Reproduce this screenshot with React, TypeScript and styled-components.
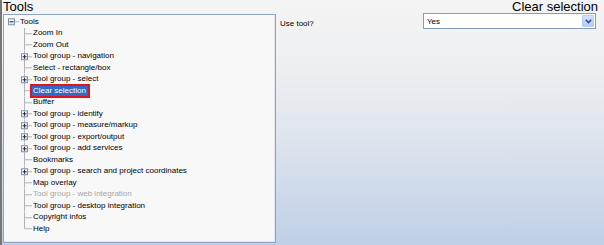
import styled, { createGlobalStyle } from 'styled-components';

type NodeKind = 'root' | 'leaf' | 'group';

interface TreeNode {
  label: string;
  kind: NodeKind;
  disabled?: boolean;
  selected?: boolean;
}

const nodes: TreeNode[] = [
  { label: 'Tools', kind: 'root' },
  { label: 'Zoom In', kind: 'leaf' },
  { label: 'Zoom Out', kind: 'leaf' },
  { label: 'Tool group - navigation', kind: 'group' },
  { label: 'Select - rectangle/box', kind: 'leaf' },
  { label: 'Tool group - select', kind: 'group' },
  { label: 'Clear selection', kind: 'leaf', selected: true },
  { label: 'Buffer', kind: 'leaf' },
  { label: 'Tool group - identify', kind: 'group' },
  { label: 'Tool group - measure/markup', kind: 'group' },
  { label: 'Tool group - export/output', kind: 'group' },
  { label: 'Tool group - add services', kind: 'group' },
  { label: 'Bookmarks', kind: 'leaf' },
  { label: 'Tool group - search and project coordinates', kind: 'group' },
  { label: 'Map overlay', kind: 'leaf' },
  { label: 'Tool group - web integration', kind: 'leaf', disabled: true },
  { label: 'Tool group - desktop integration', kind: 'leaf' },
  { label: 'Copyright infos', kind: 'leaf' },
  { label: 'Help', kind: 'leaf' },
];

const ROW = 11.5;

const GlobalStyle = createGlobalStyle`
  html, body {
    margin: 0;
    padding: 0;
  }
  body {
    font-family: "Liberation Sans", Arial, sans-serif;
    color: #000;
  }
`;

const Page = styled.div`
  width: 604px;
  height: 245px;
  box-sizing: border-box;
  border-left: 2px solid #767676;
  background: linear-gradient(
    to bottom,
    #f4f4f4 0%,
    #eeeff1 25%,
    #e2e7ef 50%,
    #d0dbea 75%,
    #c0cfe6 100%
  );
  display: flex;
  flex-direction: column;
  overflow: hidden;
`;

const Header = styled.div`
  height: 14px;
  display: flex;
  justify-content: space-between;
  align-items: center;
  padding: 0 6px 0 1px;
  font-size: 13px;
  line-height: 14px;
`;

const Body = styled.div`
  display: grid;
  grid-template-columns: 274px 1fr;
  column-gap: 4px;
`;

const TreePanel = styled.div`
  margin-left: 1px;
  height: 229px;
  box-sizing: border-box;
  background: #f8f8f8;
  border: 1px solid #8ea4c4;
  box-shadow: inset -1px -1px 0 #dfe5ee;
  padding: 1px 0 0 0;
  font-size: 8px;
`;

const Row = styled.div<{ $indent: number }>`
  height: ${ROW}px;
  display: flex;
  align-items: center;
  padding-left: ${({ $indent }) => $indent}px;
`;

const Label = styled.span<{ $selected?: boolean; $disabled?: boolean }>`
  line-height: 10px;
  padding: 0 2px 0 1px;
  white-space: nowrap;
  color: ${({ $selected, $disabled }) => ($selected ? '#fff' : $disabled ? '#a7a7a7' : '#000')};
  background: ${({ $selected }) => ($selected ? '#316ac5' : 'transparent')};
  outline: ${({ $selected }) => ($selected ? '2px solid #e0141b' : 'none')};
`;

const Form = styled.div`
  display: flex;
  align-items: flex-start;
`;

const FieldLabel = styled.div`
  width: 143px;
  font-size: 8px;
  padding-top: 5px;
`;

const Select = styled.div`
  margin-top: -1px;
  width: 173px;
  height: 16px;
  box-sizing: border-box;
  border: 1px solid #7f9db9;
  background: #fff;
  display: flex;
  align-items: center;
  justify-content: space-between;
  padding: 0 1px 0 3px;
  font-size: 8px;
`;

const ArrowButton = styled.div`
  width: 12px;
  height: 12px;
  box-sizing: border-box;
  border: 1px solid #b9cdf4;
  border-radius: 1px;
  background: linear-gradient(to bottom, #d4e1fc, #b6cbf5);
  display: flex;
  align-items: center;
  justify-content: center;
`;

function Branch ({ kind, last }: { kind: NodeKind; last: boolean }) {
  const mid = ROW / 2;
  const line = { stroke: '#b4b4b4', strokeWidth: 1 };

  return (
    <svg width="15" height={ROW} viewBox={`0 0 15 ${ROW}`} style={{ flex: 'none' }}>
      <defs>
        <linearGradient id="boxFill" x1="0" y1="0" x2="1" y2="1">
          <stop offset="0" stopColor="#ffffff" />
          <stop offset="1" stopColor="#d8d4c8" />
        </linearGradient>
      </defs>
      {kind !== 'root' && (
        <line x1="7.5" y1="0" x2="7.5" y2={last ? mid : ROW} {...line} />
      )}
      <line x1="7.5" y1={mid} x2="15" y2={mid} {...line} />
      {kind !== 'leaf' && (
        <g>
          <rect x="4.5" y={mid - 3} width="6" height="6" fill="url(#boxFill)" stroke="#7f93b0" />
          <line x1="5.5" y1={mid} x2="9.5" y2={mid} stroke="#1f2f4f" />
          {kind === 'group' && (
            <line x1="7.5" y1={mid - 2} x2="7.5" y2={mid + 2} stroke="#1f2f4f" />
          )}
        </g>
      )}
    </svg>
  );
}

export default function App () {
  return (
    <>
      <GlobalStyle />
      <Page>
        <Header>
          <span>Tools</span>
          <span>Clear selection</span>
        </Header>
        <Body>
          <TreePanel>
            {nodes.map((node, index) => (
              <Row key={index} $indent={node.kind === 'root' ? 0 : 13}>
                <Branch kind={node.kind} last={index === nodes.length - 1} />
                <Label $selected={node.selected} $disabled={node.disabled}>
                  {node.label}
                </Label>
              </Row>
            ))}
          </TreePanel>
          <Form>
            <FieldLabel>Use tool?</FieldLabel>
            <Select>
              <span>Yes</span>
              <ArrowButton>
                <svg width="7" height="5" viewBox="0 0 7 5">
                  <path d="M0.8 0.8 L3.5 3.5 L6.2 0.8" fill="none" stroke="#2c4d8a" strokeWidth="1.6" />
                </svg>
              </ArrowButton>
            </Select>
          </Form>
        </Body>
      </Page>
    </>
  );
}
